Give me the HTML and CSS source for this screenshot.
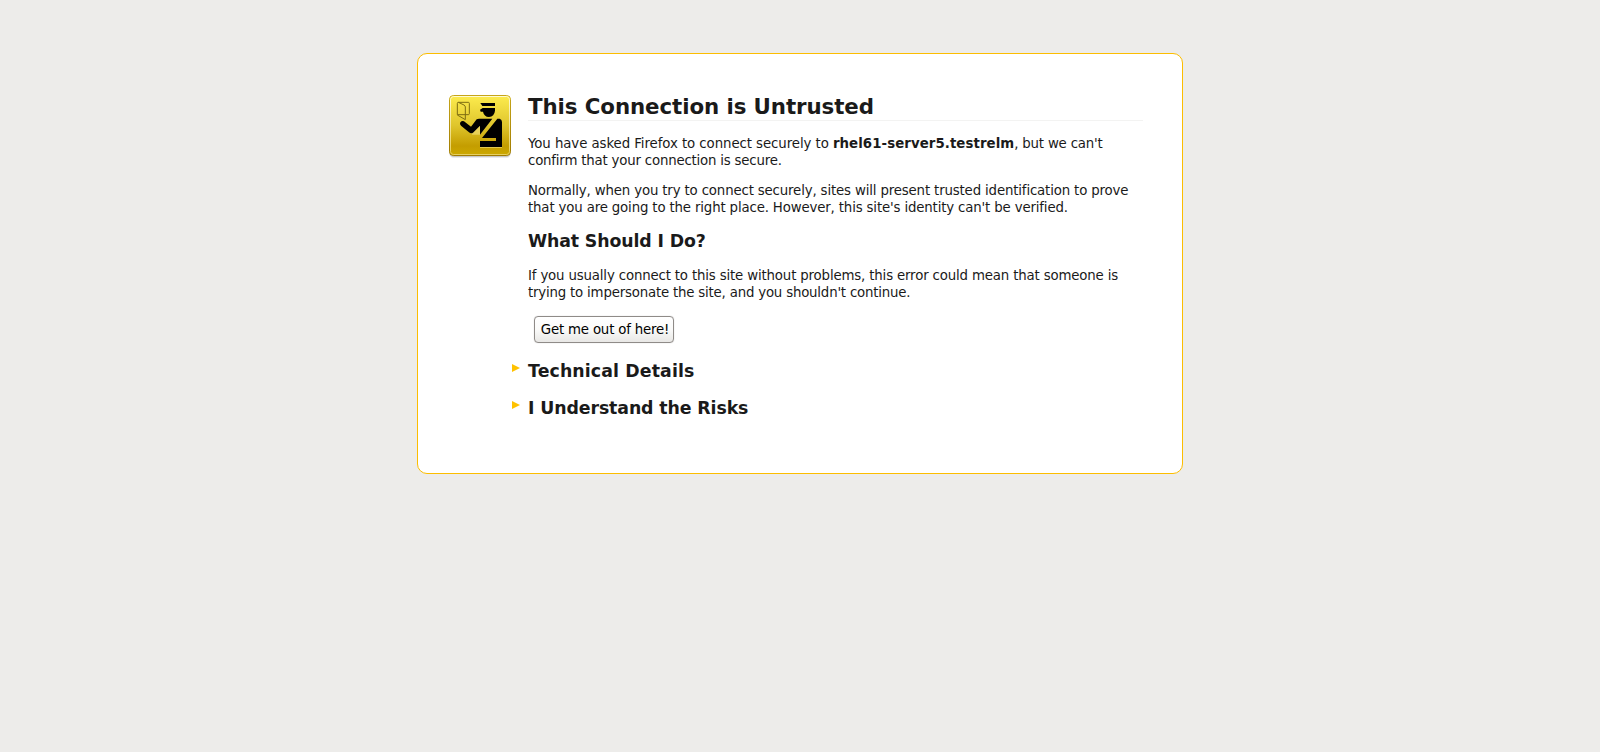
FILE: index.html
```html
<!DOCTYPE html>
<html lang="en">
<head>
<meta charset="utf-8">
<title>Untrusted Connection</title>
<link rel="stylesheet" href="styles.css">
</head>
<body>
<main class="card">
  <svg class="badge" viewBox="24 27 192 192" aria-hidden="true">
    <defs>
      <linearGradient id="gold" x1="0" y1="0" x2="0" y2="1">
        <stop offset="0" stop-color="#fdec4e"/>
        <stop offset=".5" stop-color="#dfc52c"/>
        <stop offset=".84" stop-color="#c49d00"/>
        <stop offset="1" stop-color="#cda900"/>
      </linearGradient>
      <linearGradient id="rim" x1="0" y1="0" x2="0" y2="1">
        <stop offset="0" stop-color="#c6a51a"/>
        <stop offset="1" stop-color="#a17c00"/>
      </linearGradient>
      <linearGradient id="shine" x1="0" y1="0" x2="0" y2="1">
        <stop offset="0" stop-color="#fffbd0"/>
        <stop offset="1" stop-color="#e6cf60"/>
      </linearGradient>
    </defs>
    <rect x="28" y="36" width="184" height="183" rx="13" fill="#000" opacity=".08"/>
    <rect x="28" y="34" width="184" height="182" rx="13" fill="#000" opacity=".15"/>
    <rect x="28.500" y="31.500" width="183" height="180" rx="12" fill="url(#gold)" stroke="url(#rim)" stroke-width="3"/>
    <rect x="31.500" y="34.500" width="177" height="174" rx="9" fill="none" stroke="url(#shine)" stroke-width="3"/>
    <g fill="none" stroke="#7d6d12" stroke-width="3" stroke-linejoin="round">
      <path d="M55 52H85Q88 52 88 55V86Q88 89 85 89H52V55Q52 52 55 52L72 60Q76 62 76 66V104L52 90"/>
    </g>
    <g transform="translate(0 3)" fill="#f0dc70" opacity=".7">
      <path d="M120 165H186V186H120Z"/>
      <path d="M66 108L93 128L112 102H154L120 146L97 146Z"/>
    </g>
    <path d="M121 54H165V63H127Z"/>
    <path d="M120 74L128 69H165V77Q163 95 147 96Q132 95 129 80H122Z"/>
    <path d="M72 109L93 125L110 103Q113 101 117 101H157L120 149V122L99 143Q93 147 87 142L63 122Q58 117 61 112Q66 106 72 109Z"/>
    <path d="M172 101H179Q186 103 186 111V186H120V168H168V159H126Z"/>
  </svg>
  <section class="content">
    <h1 class="title">This Connection is Untrusted</h1>
    <p class="text"><span class="loose">You have asked Firefox to connect securely to </span><b class="host">rhel61-server5.testrelm</b><span class="tight">, but we can't<br>confirm that your connection is secure.</span></p>
    <p class="text">Normally, when you try to connect securely, sites will present trusted identification to prove<br>that you are going to the right place. However, this site's identity can't be verified.</p>
    <h2 class="heading">What Should I Do?</h2>
    <p class="text"><span class="snug">If you usually connect to this site without problems, this error could mean that someone is</span><br><span class="tight">trying to impersonate the site, and you shouldn't continue.</span></p>
    <button class="leave" type="button">Get me out of here!</button>
    <h2 class="heading expander wide">Technical Details</h2>
    <h2 class="heading expander">I Understand the Risks</h2>
  </section>
</main>
</body>
</html>
```

FILE: styles.css
```css
body {
  margin: 0;
  background: #edecea;
  color: #1a1a1a;
  font: 13.333px/17px "DejaVu Sans", sans-serif;
}
.card {
  box-sizing: border-box;
  display: flex;
  align-items: flex-start;
  gap: 16px;
  width: 766px;
  height: 421px;
  margin: 53px auto 0;
  padding: 40px 39px 40px 30px;
  border: 1px solid #fcbd00;
  border-radius: 10px;
  background: #fff;
}
.badge {
  flex: none;
  width: 64px;
  height: 64px;
}
.content {
  width: 615px;
  flex: none;
}
.title {
  margin: 0 0 14px;
  height: 26px;
  border-bottom: 1px solid #f3f3f2;
  font-size: 21.333px;
  line-height: 25px;
  letter-spacing: -0.08px;
}
.text {
  margin: 0 0 13px;
  letter-spacing: -0.155px;
  white-space: nowrap;
}
.loose {
  letter-spacing: -0.078px;
}
.host {
  letter-spacing: 0.07px;
}
.snug {
  letter-spacing: -0.16px;
}
.tight {
  letter-spacing: -0.195px;
}
.heading {
  margin: 0 0 14px;
  font-size: 17.333px;
  line-height: 24px;
  letter-spacing: -0.12px;
}
.leave {
  display: block;
  box-sizing: border-box;
  width: 140px;
  height: 27px;
  margin: 15px 0 16px 6px;
  padding: 0 0 0 2px;
  border: 1px solid #8f8b88;
  border-radius: 4px;
  background: linear-gradient(#fff, #fafaf9 50%, #e8e7e5);
  box-shadow: 0 0 1px #bbb;
  color: #000;
  font: inherit;
  letter-spacing: -0.19px;
}
.expander {
  position: relative;
  margin-bottom: 13px;
  letter-spacing: -0.1px;
}
.wide {
  letter-spacing: 0.12px;
}
.expander::before {
  content: "";
  position: absolute;
  left: -16px;
  top: 5px;
  border-left: 8px solid #ffc200;
  border-top: 4px solid transparent;
  border-bottom: 4px solid transparent;
}
```
